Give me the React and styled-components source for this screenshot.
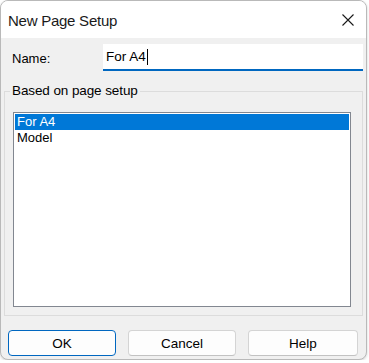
import React from "react";
import styled, { createGlobalStyle } from "styled-components";

const Global = createGlobalStyle`
  html, body { margin: 0; padding: 0; background: #ffffff; }
  body { font-family: "Liberation Sans", Arial, sans-serif; color: #000; }
  * { box-sizing: border-box; }
`;

const Window = styled.div`
  width: 367px;
  height: 360px;
  border: 1px solid #b9b9b9;
  border-radius: 8px;
  overflow: hidden;
  background: #f0f0f0;
  box-shadow: 0 1px 3px rgba(0, 0, 0, 0.18);
  display: flex;
  flex-direction: column;
`;

const TitleBar = styled.div`
  height: 37px;
  flex: none;
  background: #ffffff;
  display: flex;
  align-items: center;
  justify-content: space-between;
  padding: 0 12px 0 7px;
`;

const Title = styled.span`
  font-size: 15px;
  letter-spacing: -0.25px;
  color: #1a1a1a;
  padding-top: 1px;
`;

const CloseButton = styled.div`
  width: 12px;
  height: 12px;
  display: flex;
  margin-top: 1px;
`;

const Body = styled.div`
  flex: 1;
  display: flex;
  flex-direction: column;
  padding: 6px 3px 0 3px;
`;

const NameRow = styled.div`
  display: flex;
  align-items: center;
  height: 27px;
`;

const Label = styled.label`
  width: 99px;
  padding-left: 8px;
  font-size: 13px;
  flex: none;
  padding-top: 1px;
`;

const TextField = styled.div`
  flex: 1;
  height: 27px;
  background: #ffffff;
  border-bottom: 2px solid #0067c0;
  display: flex;
  align-items: center;
  padding-left: 3px;
  font-size: 13.5px;
`;

const Caret = styled.span`
  display: inline-block;
  width: 1px;
  height: 16px;
  background: #000;
  margin-left: 1px;
`;

const GroupBox = styled.fieldset`
  margin: 12px 0 0 0;
  padding: 13px 11px 8px 8px;
  border: 1px solid #dcdcdc;
  border-radius: 0;
  min-width: 0;
`;

const Legend = styled.legend`
  font-size: 13.5px;
  line-height: 16px;
  padding: 0 2px;
  margin-left: -3px;
  letter-spacing: -0.1px;
`;

const ListBox = styled.div`
  height: 195px;
  background: #ffffff;
  border: 1px solid #828790;
  padding: 1px;
  display: flex;
  flex-direction: column;
`;

const ListItem = styled.div`
  height: 16px;
  line-height: 16px;
  padding-left: 2px;
  font-size: 13px;
  background: ${(p) => (p.$selected ? "#0078d7" : "transparent")};
  color: ${(p) => (p.$selected ? "#ffffff" : "#000000")};
`;

const ButtonRow = styled.div`
  display: flex;
  gap: 12px;
  margin-top: 14px;
  padding-left: 4px;
`;

const Button = styled.button`
  width: ${(p) => p.$w || 108}px;
  height: 26px;
  border-radius: 4px;
  background: #fdfdfd;
  border: 1px solid ${(p) => (p.$default ? "#0067c0" : "#d4d4d4")};
  border-bottom-color: ${(p) => (p.$default ? "#0067c0" : "#c2c2c2")};
  font-family: "Liberation Sans", Arial, sans-serif;
  font-size: 13.5px;
  color: #000;
  padding: 0;
  padding-top: 1px;
`;

export default function App() {
  return (
    <>
      <Global />
      <Window>
        <TitleBar>
          <Title>New Page Setup</Title>
          <CloseButton>
            <svg width="12" height="12" viewBox="0 0 12 12">
              <path d="M0.5 0.5 L11.5 11.5 M11.5 0.5 L0.5 11.5" stroke="#1a1a1a" strokeWidth="1.1" fill="none" />
            </svg>
          </CloseButton>
        </TitleBar>
        <Body>
          <NameRow>
            <Label>Name:</Label>
            <TextField>
              For A4
              <Caret />
            </TextField>
          </NameRow>
          <GroupBox>
            <Legend>Based on page setup</Legend>
            <ListBox>
              <ListItem $selected>For A4</ListItem>
              <ListItem>Model</ListItem>
            </ListBox>
          </GroupBox>
          <ButtonRow>
            <Button $default>OK</Button>
            <Button>Cancel</Button>
            <Button $w={110}>Help</Button>
          </ButtonRow>
        </Body>
      </Window>
    </>
  );
}
